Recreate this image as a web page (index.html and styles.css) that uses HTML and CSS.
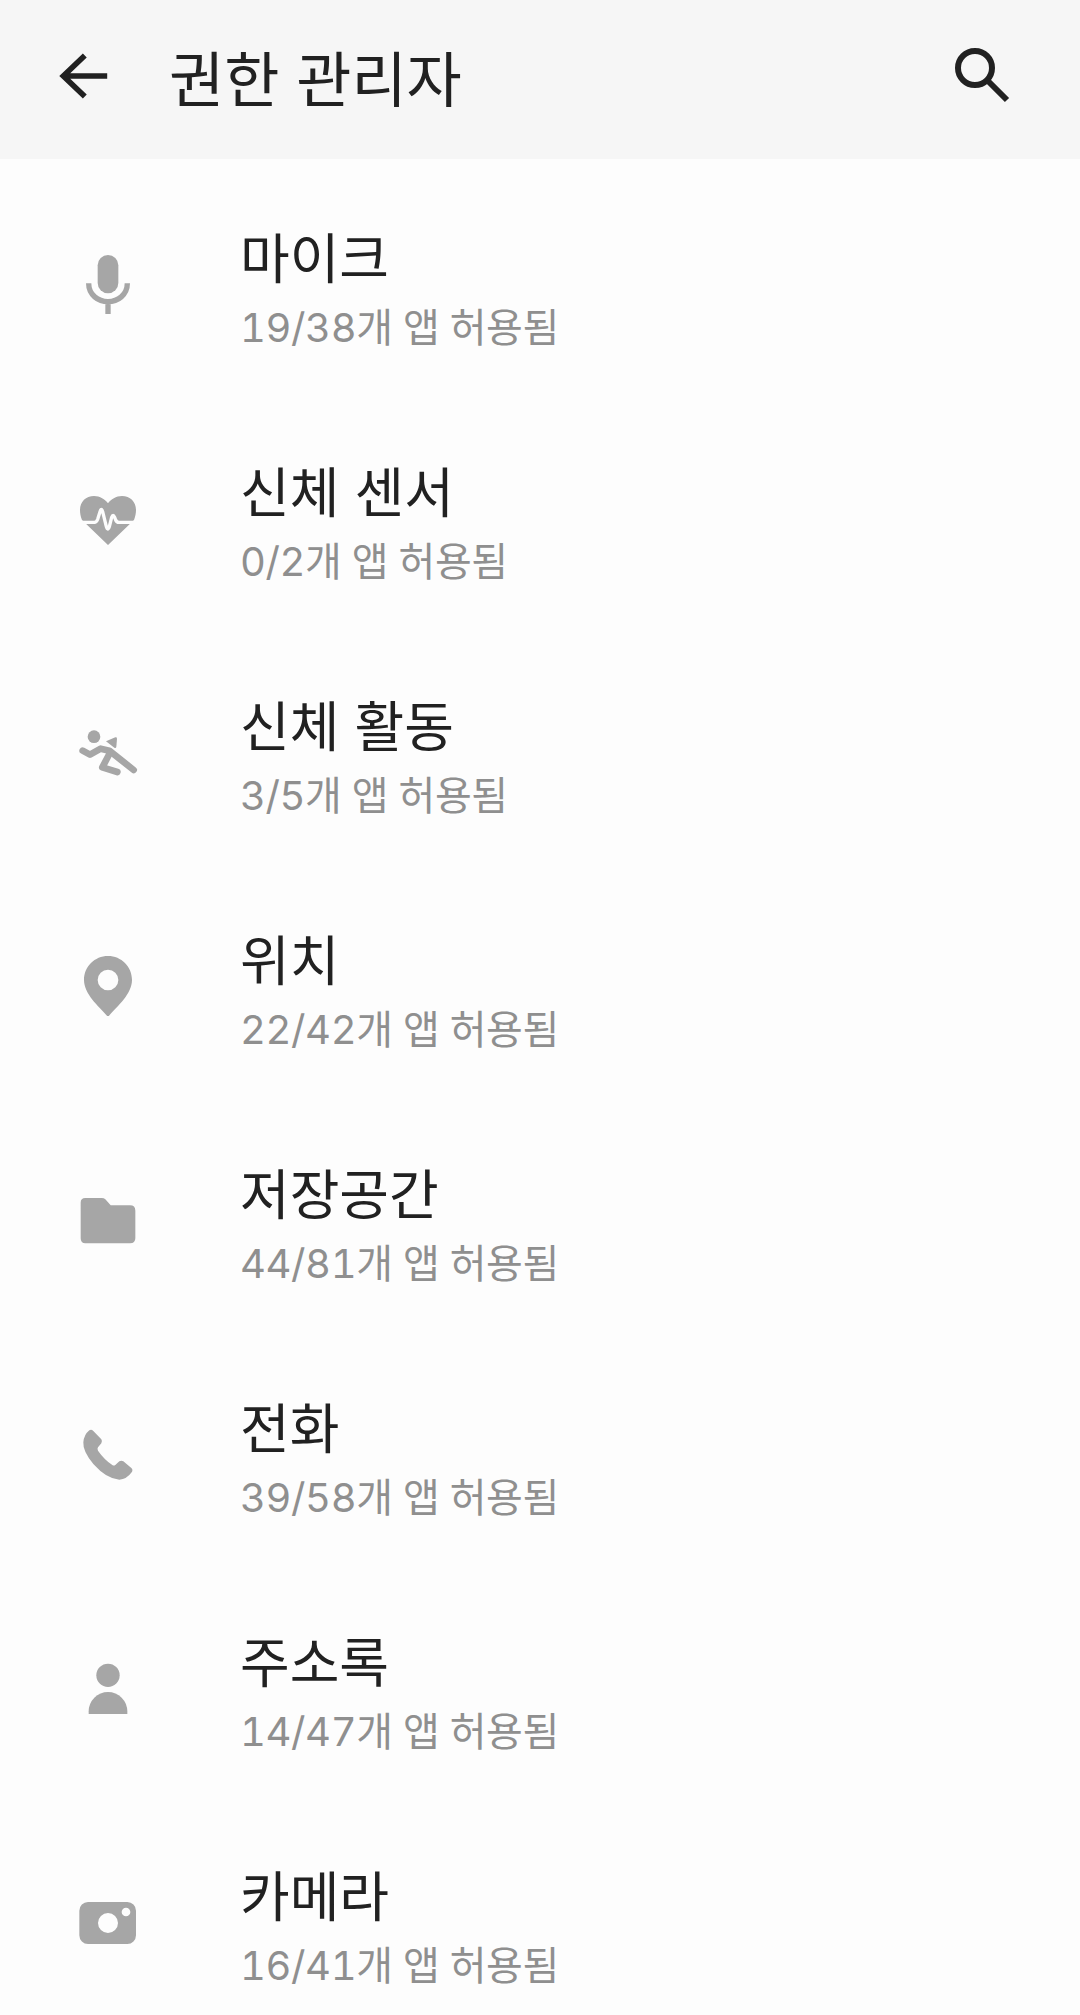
FILE: index.html
```html
<!DOCTYPE html>
<html lang="ko">
<head>
  <meta charset="UTF-8">
  <title>권한 관리자</title>
  <link rel="stylesheet" href="styles.css">
</head>
<body>

  <header class="appbar">
    <svg class="appbar-icon back" viewBox="0 0 60 60"><path d="M57 30H12M33 8 10 30l23 22"/></svg>
    <h1 class="appbar-title">권한 관리자</h1>
    <svg class="appbar-icon search" viewBox="0 2 60 60"><circle cx="24" cy="24" r="17"/><path d="M36 36 56 56"/></svg>
  </header>

  <ul class="perm-list">
    <li class="perm-row">
      <svg class="perm-icon" viewBox="54 42 180 180">
        <rect x="113" y="45" width="62" height="115" rx="31"/>
        <path class="line" d="M86 130C86 165 115 185 144 185S202 165 202 130M144 185V225"/>
      </svg>
      <div class="perm-text">
        <div class="perm-name">마이크</div>
        <div class="perm-count">19/38개 앱 허용됨</div>
      </div>
    </li>
    <li class="perm-row">
      <svg class="perm-icon" viewBox="54 54 180 180">
        <path d="M60 120C60 95 78 78 102 78 120 78 135 88 144 100 153 88 168 78 186 78 210 78 228 95 228 120 228 130 226 140 222 150L144 225 66 150C62 140 60 130 60 120Z"/>
        <path class="pulse" d="M58 157H103Q110 157 113 148L120 125Q124 112 128 125L139 170Q143 184 148 170L155 142Q159 130 164 142L167 150Q170 157 177 157H230"/>
      </svg>
      <div class="perm-text">
        <div class="perm-name">신체 센서</div>
        <div class="perm-count">0/2개 앱 허용됨</div>
      </div>
    </li>
    <li class="perm-row">
      <svg class="perm-icon" viewBox="54 54 180 180">
        <circle cx="102" cy="98" r="19"/>
        <path d="M138 112 166 100Q171 99 171 104L169 128Q168 134 163 131Z"/>
        <path class="line thick" d="M68 140 90 152 122 134 148 140 221 198"/>
        <path class="line thick" d="M148 150 127 190 172 204"/>
      </svg>
      <div class="perm-text">
        <div class="perm-name">신체 활동</div>
        <div class="perm-count">3/5개 앱 허용됨</div>
      </div>
    </li>
    <li class="perm-row">
      <svg class="perm-icon" viewBox="54 60 180 180">
        <path fill-rule="evenodd" d="M144 60C104 60 72 92 72 132 72 175 118 212 144 243 170 212 216 175 216 132 216 92 184 60 144 60ZM144 101A31 31 0 1 1 144 163 31 31 0 1 1 144 101Z"/>
      </svg>
      <div class="perm-text">
        <div class="perm-name">위치</div>
        <div class="perm-count">22/42개 앱 허용됨</div>
      </div>
    </li>
    <li class="perm-row">
      <svg class="perm-icon" viewBox="54 60 180 180">
        <path d="M76 84H125Q132 84 136 88L152 106H210Q226 106 226 122V205Q226 220 210 220H76Q62 220 62 205V98Q62 84 76 84Z"/>
      </svg>
      <div class="perm-text">
        <div class="perm-name">저장공간</div>
        <div class="perm-count">44/81개 앱 허용됨</div>
      </div>
    </li>
    <li class="perm-row">
      <svg class="perm-icon" viewBox="54 60 180 180">
        <path d="M88 79Q94 75 100 81L124 106Q128 112 124 118L114 130Q111 134 114 140 132 166 158 184 162 186 166 183L178 172Q184 168 190 172L214 192Q220 198 215 205 200 226 178 227 140 225 100 180 68 142 70 115 72 92 88 79Z"/>
      </svg>
      <div class="perm-text">
        <div class="perm-name">전화</div>
        <div class="perm-count">39/58개 앱 허용됨</div>
      </div>
    </li>
    <li class="perm-row">
      <svg class="perm-icon" viewBox="54 60 180 180">
        <circle cx="144" cy="112" r="35"/>
        <path d="M86 228V220A58 58 0 0 1 202 220V228Z"/>
      </svg>
      <div class="perm-text">
        <div class="perm-name">주소록</div>
        <div class="perm-count">14/47개 앱 허용됨</div>
      </div>
    </li>
    <li class="perm-row">
      <svg class="perm-icon" viewBox="54 60 180 180">
        <path fill-rule="evenodd" d="M84 90H202A26 26 0 0 1 228 116V190A26 26 0 0 1 202 216H84A26 26 0 0 1 58 190V116A26 26 0 0 1 84 90ZM144 123A30 30 0 1 0 144 183 30 30 0 1 0 144 123ZM198 107A13 13 0 1 0 198 133 13 13 0 1 0 198 107Z"/>
      </svg>
      <div class="perm-text">
        <div class="perm-name">카메라</div>
        <div class="perm-count">16/41개 앱 허용됨</div>
      </div>
    </li>
  </ul>

</body>
</html>
```

FILE: styles.css
```css
html, body {
  margin: 0;
  height: 2015px;
  overflow: hidden;
}

body {
  background-color: #fdfdfd;
  font-family: "Noto Sans CJK KR", "Noto Sans", sans-serif;
}

.appbar {
  display: flex;
  align-items: center;
  height: 159px;
  padding: 0 69px 8px 54px;
  box-sizing: border-box;
  background-color: #f6f6f6;
}

.appbar-icon {
  flex: none;
  fill: none;
  stroke: #212121;
  stroke-width: 6;
}

.back {
  width: 56px;
  height: 56px;
}

.search {
  width: 60px;
  height: 60px;
}

.appbar-title {
  flex: 1;
  margin: 0 0 0 59px;
  color: #212121;
  font-size: 60px;
  font-weight: 400;
  line-height: 1;
}

.perm-list {
  list-style: none;
  margin: 0;
  padding: 8px 0 0;
}

.perm-row {
  display: flex;
  align-items: center;
  height: 234px;
  padding-left: 78px;
  box-sizing: border-box;
}

.perm-icon {
  width: 60px;
  height: 60px;
  flex: none;
  fill: #a6a6a6;
}

.perm-icon .line {
  fill: none;
  stroke: #a6a6a6;
  stroke-width: 16;
}

.perm-icon .thick {
  stroke-width: 20;
  stroke-linecap: round;
  stroke-linejoin: round;
}

.perm-icon .pulse {
  fill: none;
  stroke: #fdfdfd;
  stroke-width: 10;
}

.perm-text {
  margin: 0 0 -10px 102px;
}

.perm-name {
  color: #212121;
  font-size: 54px;
  line-height: 78px;
}

.perm-count {
  color: #8f8f8f;
  font-family: Inter, "Noto Sans CJK KR", sans-serif;
  font-size: 40px;
  font-variant-numeric: tabular-nums;
  letter-spacing: -0.4px;
  line-height: 66px;
}
```
